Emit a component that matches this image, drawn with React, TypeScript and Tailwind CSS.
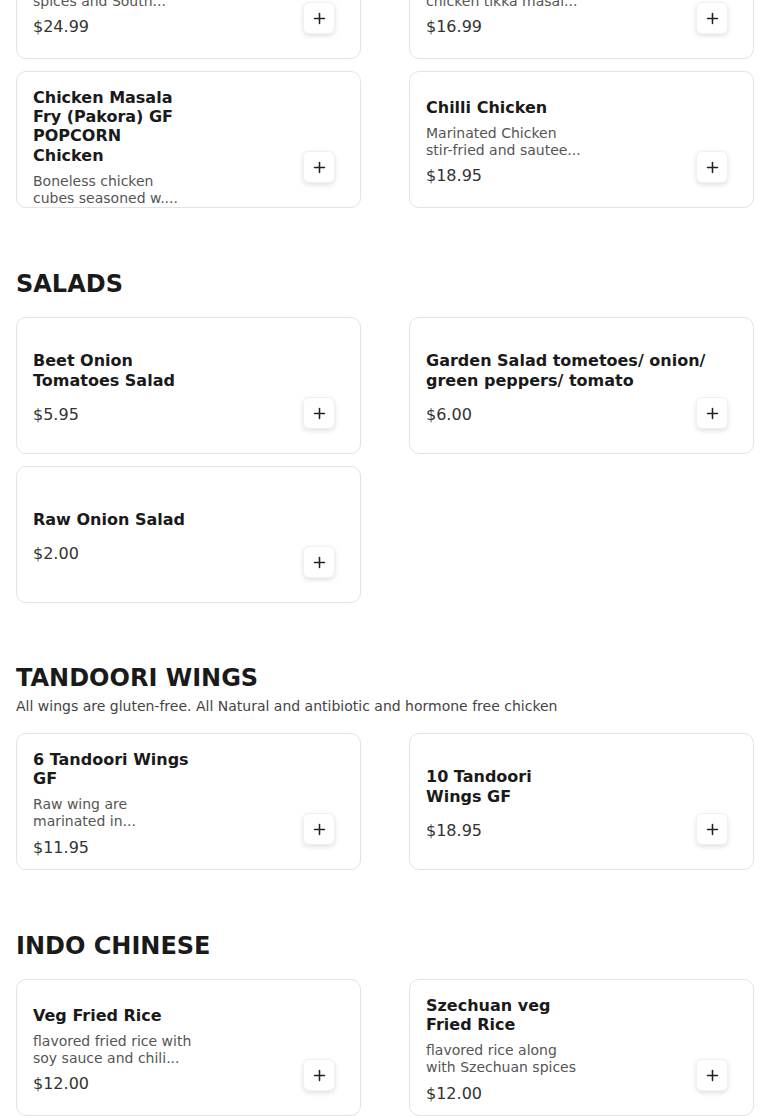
import React from 'react';
import { Plus } from 'lucide-react';

type Item = {
  title: string[];
  desc?: string[];
  price: string;
  top?: boolean;
};

type Section = {
  name?: string;
  note?: string;
  items: Item[];
};

const SECTIONS: Section[] = [
  {
    items: [
      { title: ['Chicken Biryani'], desc: ['Basmati rice cooked with', 'spices and South...'], price: '$24.99' },
      { title: ['Butter Chicken'], desc: ['Boneless pieces of', 'chicken tikka masal...'], price: '$16.99' },
      {
        title: ['Chicken Masala', 'Fry (Pakora) GF', 'POPCORN', 'Chicken'],
        desc: ['Boneless chicken', 'cubes seasoned w....'],
        price: '$14.99',
        top: true,
      },
      { title: ['Chilli Chicken'], desc: ['Marinated Chicken', 'stir-fried and sautee...'], price: '$18.95' },
    ],
  },
  {
    name: 'SALADS',
    items: [
      { title: ['Beet Onion', 'Tomatoes Salad'], price: '$5.95' },
      { title: ['Garden Salad tometoes/ onion/', 'green peppers/ tomato'], price: '$6.00' },
      { title: ['Raw Onion Salad'], price: '$2.00' },
    ],
  },
  {
    name: 'TANDOORI WINGS',
    note: 'All wings are gluten-free. All Natural and antibiotic and hormone free chicken',
    items: [
      { title: ['6 Tandoori Wings', 'GF'], desc: ['Raw wing are', 'marinated in...'], price: '$11.95' },
      { title: ['10 Tandoori', 'Wings GF'], price: '$18.95' },
    ],
  },
  {
    name: 'INDO CHINESE',
    items: [
      { title: ['Veg Fried Rice'], desc: ['flavored fried rice with', 'soy sauce and chili...'], price: '$12.00' },
      { title: ['Szechuan veg', 'Fried Rice'], desc: ['flavored rice along', 'with Szechuan spices'], price: '$12.00' },
    ],
  },
];

const MenuCard: React.FC<{ item: Item }> = ({ item }) => {
  return (
    <div className="flex h-[137px] overflow-hidden rounded-[10px] border border-[#e3e3e3] bg-white p-4">
      <div className={`min-w-0 flex-1 pt-[7px] ${item.top ? 'self-start -mt-[7px]' : 'self-center'}`}>
        <div className="mb-2 text-base font-bold leading-[1.2] text-[#1a1a1a]">
          {item.title.map((line) => (
            <div key={line} className="whitespace-nowrap">{line}</div>
          ))}
        </div>
        {item.desc && (
          <div className="text-sm leading-[1.2] text-[#555555]">
            {item.desc.map((line) => (
              <div key={line} className="whitespace-nowrap">{line}</div>
            ))}
          </div>
        )}
        <div className={`${item.desc ? 'mt-[6px]' : 'mt-[13px]'} text-base leading-6 text-[#333333]`}>
          {item.price}
        </div>
      </div>
      <div className="mb-2 mr-[9px] shrink-0 self-end">
        <button className="flex h-8 w-8 items-center justify-center rounded-md border border-[#f0f0f0] bg-white text-[#222222] shadow-[0_2px_5px_rgba(0,0,0,0.12)]">
          <Plus size={17} strokeWidth={2.2} />
        </button>
      </div>
    </div>
  );
};

const App: React.FC = () => {
  return (
    <div className="min-h-screen bg-white px-4 pb-10 font-['DejaVu_Sans',sans-serif]">
      {SECTIONS.map((section, i) => (
        <section key={i} className={i === 0 ? '-mt-[78px]' : 'mt-[58px]'}>
          {section.name && (
            <div className={section.note ? 'mb-[17px] pt-[1px]' : 'mb-[17px] pt-[2px]'}>
              <h2 className="text-2xl font-bold leading-8 text-[#1a1a1a]">{section.name}</h2>
              {section.note && (
                <p className="mt-[2px] text-sm leading-5 text-[#444444]">{section.note}</p>
              )}
            </div>
          )}
          <div className="grid grid-cols-2 gap-x-12 gap-y-3">
            {section.items.map((item) => (
              <MenuCard key={item.title.join(' ')} item={item} />
            ))}
          </div>
        </section>
      ))}
    </div>
  );
};

export default App;
